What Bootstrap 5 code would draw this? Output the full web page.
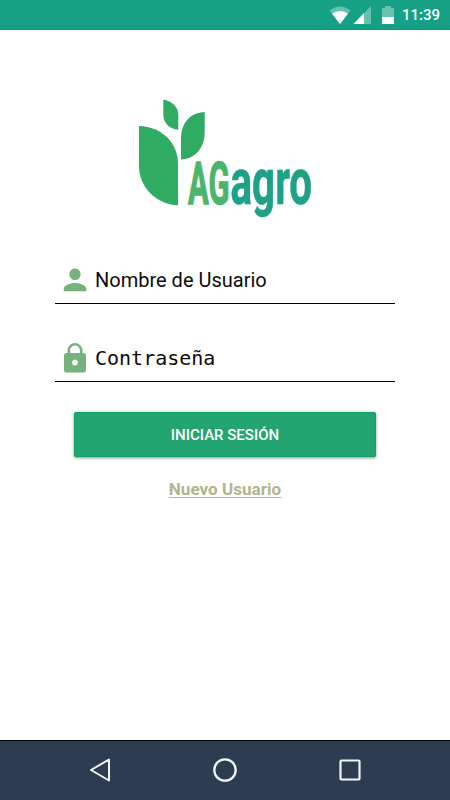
<!DOCTYPE html>
<html lang="es">
<head>
<meta charset="utf-8">
<meta name="viewport" content="width=device-width, initial-scale=1">
<title>AGagro</title>
<link href="https://cdn.jsdelivr.net/npm/bootstrap@5.3.0/dist/css/bootstrap.min.css" rel="stylesheet">
<style>
body { font-family: Roboto, sans-serif; height: 800px; background: #fff; color: #000; }
svg { display: block; flex: none; }
.status-bar { height: 30px; background: #16a085; border-bottom: 1px solid #12957a; padding: 1px 10px 0 0; font-size: 15px; font-weight: 500; line-height: 30px; }
.brand-logo { margin: 66px 0 0 130px; }
.login-form { margin: 28px 55px 0; }
.login-field { height: 52px; border-bottom: 1px solid #000; padding: 4px 0 0 5px; }
.login-field + .login-field { margin-top: 26px; }
.login-field .form-control { font-size: 20px; line-height: 30px; color: #000; height: 46px; padding: 0 0 0 5px; }
.login-field .form-control::placeholder { color: #0c0c0c; opacity: 1; }
.login-field .mono-input { font-family: "DejaVu Sans Mono", monospace; }
.login-btn { --bs-btn-color: #fff; --bs-btn-bg: #22a571; --bs-btn-border-color: #0ca266; --bs-btn-hover-bg: #1d9665; --bs-btn-hover-color: #fff; height: 45px; margin: 30px 19px 0; padding: 2px 0 0; font-size: 15px; font-weight: 500; --bs-btn-border-radius: 2px; box-shadow: 0 1px 3px rgba(0,0,0,.45); }
.signup-link { color: #b1b58d; font-size: 17.100px; font-weight: 700; line-height: 24px; margin-top: 20px; text-underline-offset: 2px; text-decoration-thickness: 1px; }
.soft-keys { height: 60px; background: #2c3c51; border-top: 1px solid #000; padding: 0 85px 1px; }
</style>
</head>
<body class="d-flex flex-column overflow-hidden">
<header class="status-bar d-flex align-items-center justify-content-end text-white">
  <svg width="65" height="30" viewBox="329 0 65 30" class="me-2" fill="#fff">
    <path d="M329.500 10.500Q340 2.500 350.500 10.500L340 24Z" opacity=".35"/>
    <path d="M332 13.500Q340 8.500 348 13.500L340 24Z"/>
    <path d="M371 6V24H353.500Z" opacity=".35"/>
    <path d="M364 13V24H353.500Z"/>
    <path d="M382 8H385V6H391V8H394V17H382Z" opacity=".35"/>
    <path d="M382 17H394V24H382Z"/>
  </svg>
  <span>11:39</span>
</header>
<main class="flex-grow-1 d-flex flex-column">
  <svg class="brand-logo" width="190" height="128" viewBox="130 96 190 128" role="img" aria-label="AGagro">
    <g fill="#30ab62">
      <path d="M163.300 99.800C171 100.500 178.300 107 178.300 114.500V129.800C169 129 163.300 123 163.300 114.500Z"/>
      <path d="M204.700 112V132C204.700 148 195 159 181 159.500V139C181 123 190 112.500 204.700 112Z"/>
      <path d="M139 126C162 126.500 178 143 178 164V205.300C156 204.500 139 187 139 166Z"/>
    </g>
    <g font-family="Roboto, sans-serif" font-weight="700">
      <text transform="translate(188 203.800) scale(.5 1)" font-size="59.500" fill="#4bb56b" stroke="#4bb56b" stroke-width="1.300" textLength="83" lengthAdjust="spacingAndGlyphs">AG</text>
      <text transform="translate(230.500 204.200) scale(.6 1)" font-size="65" fill="#1da187" stroke="#1da187" stroke-width=".6" textLength="136" lengthAdjust="spacingAndGlyphs">agro</text>
    </g>
  </svg>
  <form class="login-form d-flex flex-column" onsubmit="return false">
    <div class="login-field d-flex align-items-center">
      <svg width="30" height="30" viewBox="0 0 24 24" fill="#75b27d"><path d="M12 12c2.400 0 4.500-2.100 4.500-4.700S14.400 2.700 12 2.700 7.500 4.800 7.500 7.300 9.600 12 12 12zm0 2.300c-3 0-9 1.500-9 4.500V21h18v-2.200c0-3-6-4.500-9-4.500z"/></svg>
      <input class="form-control border-0 shadow-none bg-transparent rounded-0" type="text" placeholder="Nombre de Usuario" aria-label="Nombre de Usuario">
    </div>
    <div class="login-field d-flex align-items-center">
      <svg width="30" height="30" viewBox="60 343 30 30"><path d="M68.800 354V350.500a6.200 6.200 0 0 1 12.400 0V354" fill="none" stroke="#75b27d" stroke-width="2.600"/><path fill="#75b27d" fill-rule="evenodd" d="M66.500 353H83.500Q86 353 86 355.500V370Q86 372.500 83.500 372.500H66.500Q64 372.500 64 370V355.500Q64 353 66.500 353ZM75 359.500a3 3 0 1 0 .01 0Z"/></svg>
      <input class="form-control mono-input border-0 shadow-none bg-transparent rounded-0" type="password" placeholder="Contraseña" aria-label="Contraseña">
    </div>
    <button class="btn login-btn" type="submit">INICIAR SESIÓN</button>
    <a href="#" class="signup-link align-self-center">Nuevo Usuario</a>
  </form>
</main>
<nav class="soft-keys d-flex align-items-center justify-content-between" aria-label="Sistema">
  <svg width="30" height="30" fill="none" stroke="#f4f4f4" stroke-width="2" stroke-linejoin="round"><path d="M24 4.500V25.500L6 15Z"/></svg>
  <svg width="30" height="30" fill="none" stroke="#f4f4f4" stroke-width="2.300"><circle cx="15" cy="15" r="10.700"/></svg>
  <svg width="30" height="30" fill="none" stroke="#f4f4f4" stroke-width="2.200"><rect x="5.500" y="5.500" width="19" height="19" rx="1"/></svg>
</nav>
<script src="https://cdn.jsdelivr.net/npm/bootstrap@5.3.0/dist/js/bootstrap.bundle.min.js"></script>
</body>
</html>
